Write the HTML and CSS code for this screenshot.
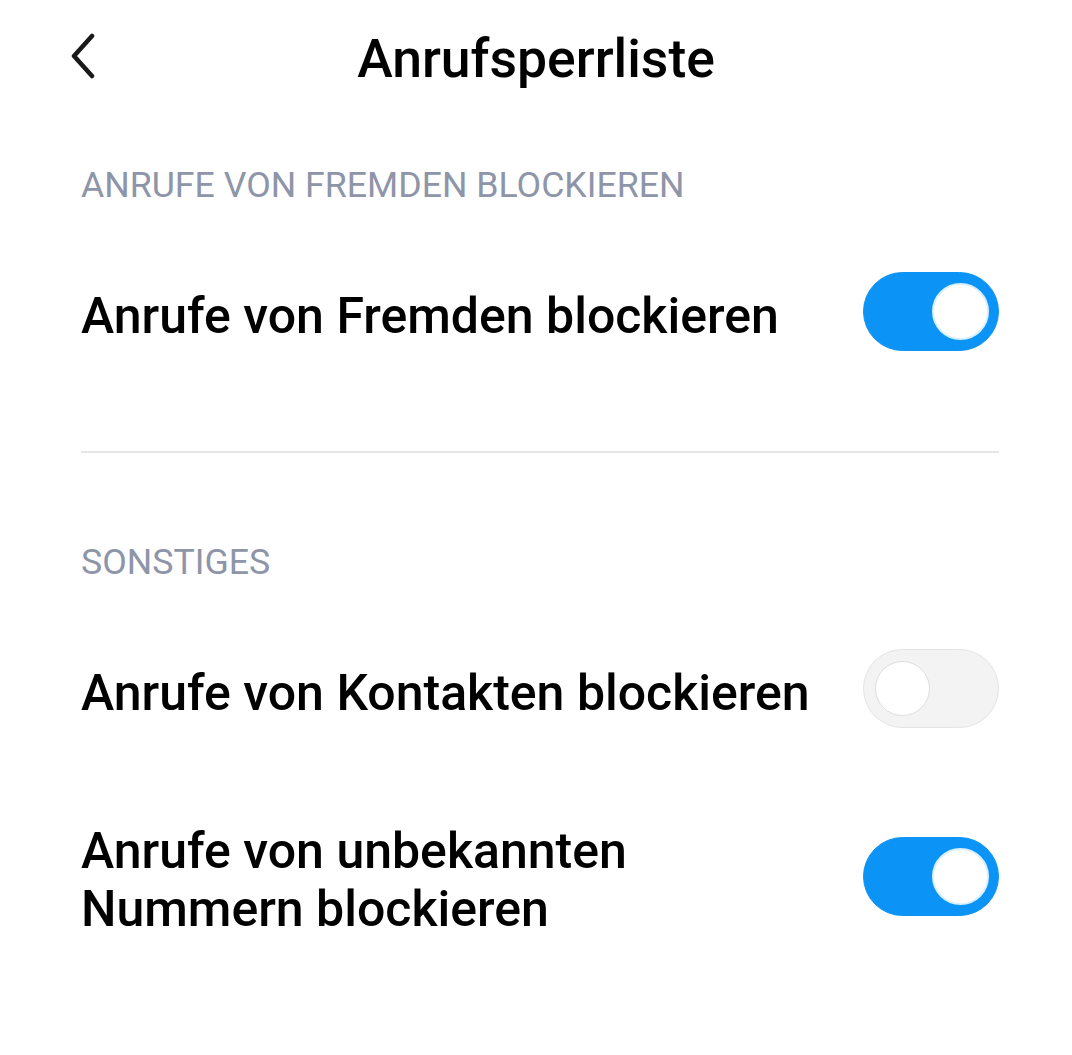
FILE: index.html
```html
<!DOCTYPE html>
<html lang="de">
<head>
    <meta charset="UTF-8">
    <meta name="viewport" content="width=device-width, initial-scale=1.0">
    <title>Anrufsperrliste</title>
    <link rel="stylesheet" href="styles.css">
</head>
<body>

    <header class="topbar">
        <button class="back" aria-label="Zurück">
            <svg width="40" height="48" viewBox="0 0 40 48">
                <path d="M22 5 L4 25 L22 45" fill="none" stroke="#1a1a1a" stroke-width="4.5" stroke-linecap="round" stroke-linejoin="round"/>
            </svg>
        </button>
        <h1 class="title">Anrufsperrliste</h1>
    </header>

    <main class="content">
        <h2 class="section-title">ANRUFE VON FREMDEN BLOCKIEREN</h2>
        <div class="row">
            <span class="label">Anrufe von Fremden blockieren</span>
            <span class="switch on"><span class="knob"></span></span>
        </div>

        <hr class="divider">

        <h2 class="section-title">SONSTIGES</h2>
        <div class="row">
            <span class="label">Anrufe von Kontakten blockieren</span>
            <span class="switch"><span class="knob"></span></span>
        </div>
        <div class="row">
            <span class="label">Anrufe von unbekannten Nummern blockieren</span>
            <span class="switch on"><span class="knob"></span></span>
        </div>
    </main>

</body>
</html>
```

FILE: styles.css
```css
body {
    margin: 0;
    background: #ffffff;
    color: #000000;
    font-family: Roboto, "Noto Sans", Arial, sans-serif;
}
.topbar {
    position: relative;
    height: 116px;
    display: flex;
    align-items: center;
    justify-content: center;
}
.back {
    position: absolute;
    left: 70px;
    top: 31px;
    padding: 0;
    border: none;
    background: none;
    cursor: pointer;
}
.title {
    margin: 2px 0 0;
    font-size: 53.5px;
    font-weight: 500;
    line-height: 60px;
}
.content {
    padding: 0 73px 0 81px;
}
.section-title {
    margin: 44px 0 22px;
    font-size: 35.7px;
    font-weight: 400;
    line-height: 50px;
    color: #8e95a8;
}
.row {
    display: flex;
    align-items: center;
    gap: 40px;
    padding: 40px 0;
}
.row + .row {
    margin-top: 10px;
}
.label {
    flex: 1;
    padding-top: 4px;
    margin-bottom: -4px;
    font-size: 50px;
    font-weight: 500;
    line-height: 58px;
}
.switch {
    position: relative;
    flex: none;
    width: 136px;
    height: 79px;
    box-sizing: border-box;
    border-radius: 40px;
    background: #f3f3f3;
    border: 1px solid #e4e4e4;
}
.switch .knob {
    position: absolute;
    left: 11px;
    top: 11px;
    width: 55px;
    height: 55px;
    box-sizing: border-box;
    border-radius: 50%;
    background: #ffffff;
    border: 1px solid #dedede;
}
.switch.on {
    background: #0b93f6;
    border-color: #0b93f6;
}
.switch.on .knob {
    left: auto;
    right: 9px;
    width: 57px;
    height: 57px;
    top: 10px;
    border: 2px solid #d8f0ff;
}
.divider {
    margin: 60px 0 0;
    border: none;
    height: 2px;
    background: #e6e6e6;
}
.divider + .section-title {
    margin-top: 84px;
}
```
